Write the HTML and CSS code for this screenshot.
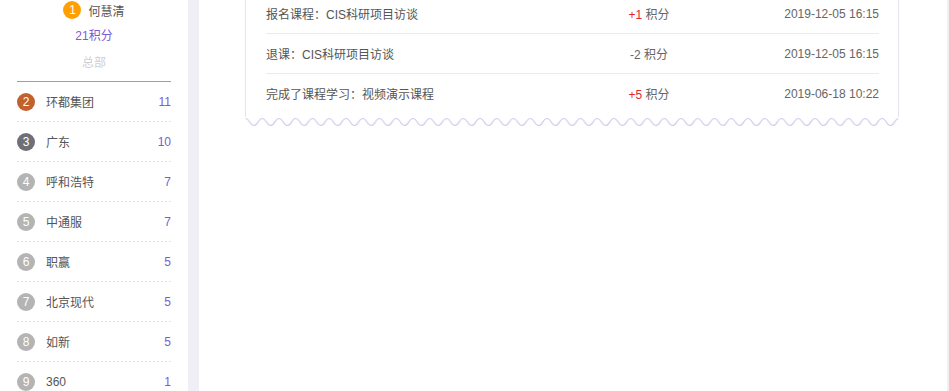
FILE: index.html
```html
<!DOCTYPE html>
<html lang="zh-CN">
<head>
  <meta charset="UTF-8">
  <meta name="viewport" content="width=device-width, initial-scale=1.0">
  <title>积分排行</title>
  <link rel="stylesheet" href="styles.css">
</head>
<body>
  <div class="page">

    <!-- Ranking sidebar -->
    <aside class="side">
      <div class="me">
        <span class="badge gold">1</span>
        <span class="me-name">何慧清</span>
      </div>
      <div class="me-score">21积分</div>
      <div class="me-dept">总部</div>

      <ul class="rank">
        <li class="rank-row"><span class="badge bronze">2</span><span class="rank-name">环都集团</span><span class="rank-num">11</span></li>
        <li class="rank-row"><span class="badge dark">3</span><span class="rank-name">广东</span><span class="rank-num">10</span></li>
        <li class="rank-row"><span class="badge">4</span><span class="rank-name">呼和浩特</span><span class="rank-num">7</span></li>
        <li class="rank-row"><span class="badge">5</span><span class="rank-name">中通服</span><span class="rank-num">7</span></li>
        <li class="rank-row"><span class="badge">6</span><span class="rank-name">职赢</span><span class="rank-num">5</span></li>
        <li class="rank-row"><span class="badge">7</span><span class="rank-name">北京现代</span><span class="rank-num">5</span></li>
        <li class="rank-row"><span class="badge">8</span><span class="rank-name">如新</span><span class="rank-num">5</span></li>
        <li class="rank-row"><span class="badge">9</span><span class="rank-name">360</span><span class="rank-num">1</span></li>
      </ul>
    </aside>

    <!-- Points log -->
    <main class="main">
      <section class="card">
        <div class="log">
          <span class="log-title">报名课程：CIS科研项目访谈</span>
          <span class="log-pts"><span class="plus">+1</span> 积分</span>
          <span class="log-date">2019-12-05 16:15</span>
        </div>
        <div class="log">
          <span class="log-title">退课：CIS科研项目访谈</span>
          <span class="log-pts">-2 积分</span>
          <span class="log-date">2019-12-05 16:15</span>
        </div>
        <div class="log">
          <span class="log-title">完成了课程学习：视频演示课程</span>
          <span class="log-pts"><span class="plus">+5</span> 积分</span>
          <span class="log-date">2019-06-18 10:22</span>
        </div>
      </section>
      <svg class="wave" width="654" height="10" viewBox="0 0 654 10">
        <defs>
          <pattern id="scallop" patternUnits="userSpaceOnUse" x="0.5" y="0" width="16.75" height="10">
            <path d="M-0.1 1.5 C4.2 1.5 4.2 8.5 8.375 8.5 C12.5 8.5 12.5 1.5 16.85 1.5" fill="none" stroke="#d3cbef" stroke-width="1.2"/>
          </pattern>
        </defs>
        <rect x="0.5" y="0" width="653" height="10" fill="url(#scallop)"/>
      </svg>
    </main>

  </div>
</body>
</html>
```

FILE: styles.css
```css
/* Global */
body {
  margin: 0;
  height: 391px;
  overflow: hidden;
  background: #f0eff5;
  font-family: "Liberation Sans", "Noto Sans CJK SC", sans-serif;
  font-size: 12px;
  color: #555;
}
.page {
  display: flex;
  gap: 11px;
  min-height: 100vh;
}

/* Sidebar */
.side {
  width: 188px;
  flex-shrink: 0;
  background: #fff;
  padding: 0 17px;
  box-sizing: border-box;
}
.me {
  display: flex;
  justify-content: center;
  align-items: center;
  gap: 7px;
  height: 20px;
}
.me-score {
  margin-top: 6px;
  line-height: 20px;
  text-align: center;
  color: #7b5bd5;
}
.me-dept {
  margin-top: 7px;
  line-height: 20px;
  text-align: center;
  color: #cfcfcf;
}
.rank {
  list-style: none;
  margin: 8px 0 0;
  padding: 0;
  border-top: 1px solid #a68cec;
}
.rank-row {
  display: flex;
  align-items: center;
  height: 39px;
  padding-bottom: 1px;
  background: repeating-linear-gradient(to right, #e2e2e2 0 2px, transparent 2px 4px) left bottom / 100% 1px no-repeat;
}
.rank-name {
  flex: 1;
  margin-left: 11px;
}
.rank-num {
  color: #7b5bd5;
}
.badge {
  width: 18px;
  height: 18px;
  border-radius: 50%;
  background: #b4b4b4;
  color: #fff;
  font-size: 12px;
  line-height: 18px;
  text-align: center;
  flex-shrink: 0;
}
.badge.gold { background: #ffa000; }
.badge.bronze { background: #c1612d; }
.badge.dark { background: #6f6f7a; }

/* Main */
.main {
  flex: 1;
  background: #fff;
  margin-right: 2px;
  padding-left: 46px;
}
.card {
  width: 654px;
  box-sizing: border-box;
  margin-top: -6px;
  padding: 0 19px 4px 20px;
  border-left: 1px solid #e6e3f0;
  border-right: 1px solid #e6e3f0;
}
.log {
  display: grid;
  grid-template-columns: 1fr 160px 150px;
  align-items: center;
  height: 39px;
  border-bottom: 1px solid #ebebeb;
}
.log:last-child {
  border-bottom: none;
}
.log-pts {
  text-align: center;
  color: #666;
}
.plus {
  color: #e3262c;
}
.log-date {
  text-align: right;
  color: #666;
}
.wave {
  display: block;
}
```
